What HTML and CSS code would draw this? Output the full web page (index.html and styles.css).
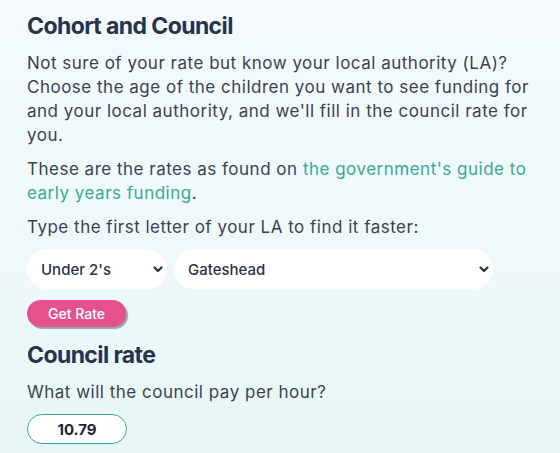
FILE: index.html
```html
<!DOCTYPE html>
<html lang="en">
<head>
<meta charset="utf-8">
<title>Cohort and Council</title>
<link rel="stylesheet" href="styles.css">
</head>
<body>
<main class="page">
  <h2 class="title">Cohort and Council</h2>
  <p class="text">Not sure of your rate but know your local authority (LA)? Choose the age of the children you want to see funding for and your local authority, and we'll fill in the council rate for you.</p>
  <p class="text">These are the rates as found on <a class="link" href="#">the government's guide to early years funding</a>.</p>
  <p class="text">Type the first letter of your LA to find it faster:</p>
  <div class="selects">
    <div class="select-wrap select-age">
      <select class="select"><option>Under 2's</option></select>
      <svg class="chev" width="10" height="7" viewBox="0 0 10 7"><path d="M1.5 1.5 L5 5 L8.5 1.5" fill="none" stroke="#2b3240" stroke-width="2.2" stroke-linecap="round" stroke-linejoin="round"/></svg>
    </div>
    <div class="select-wrap select-la">
      <select class="select"><option>Gateshead</option></select>
      <svg class="chev" width="10" height="7" viewBox="0 0 10 7"><path d="M1.5 1.5 L5 5 L8.5 1.5" fill="none" stroke="#2b3240" stroke-width="2.2" stroke-linecap="round" stroke-linejoin="round"/></svg>
    </div>
  </div>
  <button class="btn" type="button">Get Rate</button>
  <h2 class="title title-2">Council rate</h2>
  <p class="text">What will the council pay per hour?</p>
  <input class="rate" type="text" value="10.79">
</main>
</body>
</html>
```

FILE: styles.css
```css
html, body {
  margin: 0;
  padding: 0;
}
body {
  background: linear-gradient(180deg, #f4fafc 0%, #eef9fa 55%, #e7f7f5 100%);
  min-height: 453px;
  font-family: Inter, "Noto Sans", sans-serif;
  color: #3b4250;
}
.page {
  padding: 11px 28px 0 27px;
}
.title {
  margin: 0 0 10px;
  font-family: Inter, "Noto Sans", sans-serif;
  font-size: 23px;
  line-height: 30px;
  font-weight: 700;
  letter-spacing: -0.6px;
  color: #27334a;
}
.title-2 {
  margin-top: 13px;
  margin-bottom: 10px;
}
.text {
  margin: 0 0 10px;
  font-size: 17px;
  line-height: 24px;
  letter-spacing: 0.5px;
}
.link {
  color: #3ba897;
  text-decoration: none;
}
.selects {
  display: flex;
  gap: 7px;
  margin-top: 10px;
}
.select-wrap {
  position: relative;
  height: 40px;
}
.select-age { width: 140px; }
.select-la { width: 319px; }
.select {
  appearance: none;
  -webkit-appearance: none;
  width: 100%;
  height: 40px;
  border: none;
  border-radius: 20px;
  background: #ffffff;
  padding: 0 24px 0 14px;
  font-family: Inter, "Noto Sans", sans-serif;
  font-size: 15px;
  font-weight: 500;
  color: #2d3340;
}
.chev {
  position: absolute;
  right: 4px;
  top: 17px;
  pointer-events: none;
}
.btn {
  display: block;
  margin-top: 11px;
  width: 99px;
  height: 27px;
  border: none;
  border-radius: 14px;
  background: #e5508f;
  color: #ffffff;
  font-family: Inter, "Noto Sans", sans-serif;
  font-size: 14px;
  font-weight: 500;
  box-shadow: 2px 2px 1px rgba(90, 90, 100, 0.55);
  padding: 0;
}
.rate {
  display: block;
  box-sizing: border-box;
  width: 100px;
  height: 30px;
  border: 1px solid #3aa996;
  border-radius: 15px;
  background: #ffffff;
  text-align: center;
  font-family: Inter, "Noto Sans", sans-serif;
  font-size: 15px;
  font-weight: 700;
  color: #1f2430;
  margin-top: 10px;
}
```
